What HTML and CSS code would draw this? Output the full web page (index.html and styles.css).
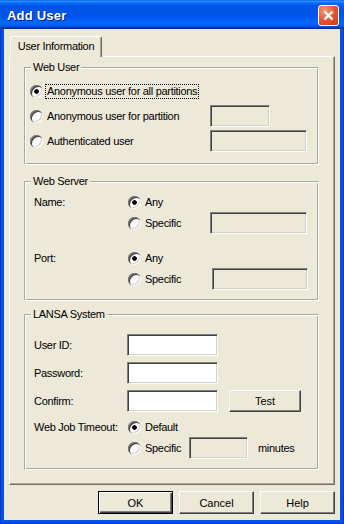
FILE: index.html
```html
<!DOCTYPE html>
<html lang="en">
<head>
	<meta charset="UTF-8">
	<title>Add User</title>
	<link rel="stylesheet" href="styles.css">
</head>
<body>
	<div class="window">
		<div class="titlebar">
			<span class="title">Add User</span>
			<button class="close" title="Close">
				<svg width="13" height="13" viewBox="0 0 13 13"><path d="M2.5 2.5L10.5 10.5M10.5 2.5L2.5 10.5" stroke="#fff" stroke-width="2.3" fill="none"/></svg>
			</button>
		</div>
		<div class="client">
			<div class="tabs">
				<div class="tab">User Information</div>
			</div>
			<section class="panel">

				<fieldset class="group webuser">
					<legend>Web User</legend>
					<div class="row">
						<label class="opt wide"><span class="dot on"></span><span class="focus">Anonymous user for all partitions</span></label>
					</div>
					<div class="row gap3">
						<label class="opt wide"><span class="dot"></span><span class="txt">Anonymous user for partition</span></label>
						<input class="box off w60" type="text" disabled>
					</div>
					<div class="row gap3">
						<label class="opt wide"><span class="dot"></span><span class="txt">Authenticated user</span></label>
						<input class="box off w97" type="text" disabled>
					</div>
				</fieldset>

				<fieldset class="group webserver">
					<legend>Web Server</legend>
					<div class="row r20">
						<span class="lbl">Name:</span>
						<label class="opt"><span class="dot on"></span><span class="txt">Any</span></label>
					</div>
					<div class="row">
						<span class="lbl"></span>
						<label class="opt mid"><span class="dot"></span><span class="txt">Specific</span></label>
						<input class="box off w97" type="text" disabled>
					</div>
					<div class="row r20 gap14">
						<span class="lbl">Port:</span>
						<label class="opt"><span class="dot on"></span><span class="txt">Any</span></label>
					</div>
					<div class="row">
						<span class="lbl"></span>
						<label class="opt mid"><span class="dot"></span><span class="txt">Specific</span></label>
						<input class="box off w96 nudge" type="text" disabled>
					</div>
				</fieldset>

				<fieldset class="group lansa">
					<legend>LANSA System</legend>
					<div class="row">
						<span class="lbl l93">User ID:</span>
						<input class="box w91" type="text">
					</div>
					<div class="row gap6">
						<span class="lbl l93">Password:</span>
						<input class="box w91" type="password">
					</div>
					<div class="row gap6">
						<span class="lbl l93">Confirm:</span>
						<input class="box w91" type="password">
						<button class="btn test">Test</button>
					</div>
					<div class="row r20 gap5">
						<span class="lbl">Web Job Timeout:</span>
						<label class="opt"><span class="dot on"></span><span class="txt">Default</span></label>
					</div>
					<div class="row">
						<span class="lbl"></span>
						<label class="opt short"><span class="dot"></span><span class="txt">Specific</span></label>
						<input class="box off w59" type="text" disabled>
						<span class="unit">minutes</span>
					</div>
				</fieldset>

			</section>
			<div class="actions">
				<button class="btn def">OK</button>
				<button class="btn">Cancel</button>
				<button class="btn">Help</button>
			</div>
		</div>
	</div>
</body>
</html>
```

FILE: styles.css
```css
*{
	margin:0;
	padding:0;
	box-sizing: border-box;
}
body{
	font-family: "Liberation Sans", Arial, sans-serif;
	font-size: 11px;
	color: #000;
	background: #fff;
}
.window{
	width: 344px;
	height: 524px;
	display: flex;
	flex-direction: column;
	background: #0055E5;
	box-shadow: inset 1px 0 0 #0831D9, inset -1px 0 0 #0831D9, inset 0 -1px 0 #0831D9;
}
.titlebar{
	height: 29px;
	flex: none;
	display: flex;
	align-items: center;
	justify-content: space-between;
	padding: 2px 5px 0 7px;
	background: linear-gradient(#0058EE 0%, #3593FF 4%, #288EFF 6%, #127DFF 8%, #036FFC 10%, #0262EE 14%, #0057E5 20%, #0054E3 24%, #0055EB 56%, #005BF5 66%, #026AFE 76%, #0062EF 86%, #0052D6 92%, #0040AB 94%, #003092 100%);
}
.title{
	color: #fff;
	font-weight: bold;
	font-size: 13px;
	letter-spacing: 0.2px;
	text-shadow: 1px 1px 0 #0A1883;
}
.close{
	width: 21px;
	height: 21px;
	display: flex;
	align-items: center;
	justify-content: center;
	border: 1px solid #fff;
	border-radius: 3px;
	outline: none;
	background: radial-gradient(circle at 30% 25%, #F2957A, #E0552F 55%, #C23A1A);
}
.client{
	flex: 1;
	margin: 0 4px 4px;
	padding: 7px 5px 0;
	background: #ECE9D8;
	letter-spacing: -0.3px;
}
.tabs{
	display: flex;
	padding-left: 1px;
}
.tab{
	position: relative;
	z-index: 1;
	width: 92px;
	height: 21px;
	margin-bottom: -1px;
	padding-top: 3px;
	text-align: center;
	line-height: 13px;
	background: #ECE9D8;
	border: 1px solid #fff;
	border-right-color: #716F64;
	border-bottom: 0;
	border-radius: 2px 2px 0 0;
	box-shadow: inset -1px 0 0 #ACA899;
}
.panel{
	height: 429px;
	padding: 4px 15px 0 14px;
	background: #ECE9D8;
	border: 1px solid #fff;
	border-right-color: #716F64;
	border-bottom-color: #716F64;
	box-shadow: inset -1px -1px 0 #ACA899;
}
.group{
	padding: 0 5px;
	border: 1px solid;
	border-color: #ACA899 #fff #fff #ACA899;
	box-shadow: inset 1px 1px 0 #fff, inset -1px -1px 0 #ACA899;
}
.group legend{
	margin-left: 1px;
	padding: 0 2px;
	line-height: 13px;
	background: #ECE9D8;
}
.webuser{
	padding-top: 6px;
	padding-bottom: 12px;
}
.webserver{
	margin-top: 10px;
	padding-top: 4px;
	padding-bottom: 10px;
}
.lansa{
	margin-top: 7px;
	padding-top: 13px;
	padding-bottom: 10px;
}
.row{
	display: flex;
	align-items: center;
	height: 22px;
}
.webserver .row, .lansa .row{
	padding-left: 4px;
}
.r20{ height: 20px; }
.gap3{ margin-top: 3px; }
.gap5{ margin-top: 5px; }
.gap6{ margin-top: 6px; }
.gap14{ margin-top: 14px; }
.lbl{
	width: 94px;
	flex: none;
	line-height: 13px;
}
.l93{ width: 93px; }
.opt{
	display: flex;
	align-items: center;
	gap: 3px;
	line-height: 13px;
	flex: none;
}
.opt .txt, .opt .focus{
	padding: 0 1px;
}
.focus{
	outline: 1px dotted #000;
}
.wide{ width: 180px; }
.mid{ width: 82px; }
.short{ width: 61px; }
.dot{
	width: 13px;
	height: 13px;
	flex: none;
	border-radius: 50%;
	background: #fff;
	box-shadow: inset 1px 1px 0 #808080, inset 2px 2px 0 #404040, inset -1px -1px 0 #fff, inset -2px -2px 0 #D4D0C8;
}
.dot.on{
	background: radial-gradient(circle, #000 0, #000 2px, #fff 2.6px);
}
.box{
	height: 22px;
	flex: none;
	background: #fff;
	border: 1px solid;
	border-color: #808080 #fff #fff #808080;
	box-shadow: inset 1px 1px 0 #404040, inset -1px -1px 0 #D4D0C8;
	outline: none;
	font: inherit;
	padding: 0 3px;
}
.box.off{ background: #ECE9D8; }
.w59{ width: 59px; }
.w60{ width: 60px; }
.w91{ width: 91px; }
.w96{ width: 96px; }
.w97{ width: 97px; }
.nudge{ margin-left: 2px; }
.unit{
	margin-left: 10px;
	line-height: 13px;
}
.btn{
	width: 75px;
	height: 23px;
	flex: none;
	background: #ECE9D8;
	border: 1px solid;
	border-color: #fff #404040 #404040 #fff;
	box-shadow: inset -1px -1px 0 #808080;
	outline: none;
	font: inherit;
	color: #000;
}
.btn.def{
	border-color: #000;
	box-shadow: inset 1px 1px 0 #fff, inset -1px -1px 0 #404040, inset -2px -2px 0 #808080;
}
.btn.test{
	width: 72px;
	height: 22px;
	margin-left: 11px;
}
.actions{
	display: flex;
	justify-content: flex-end;
	gap: 6px;
	margin-top: 6px;
}
```
